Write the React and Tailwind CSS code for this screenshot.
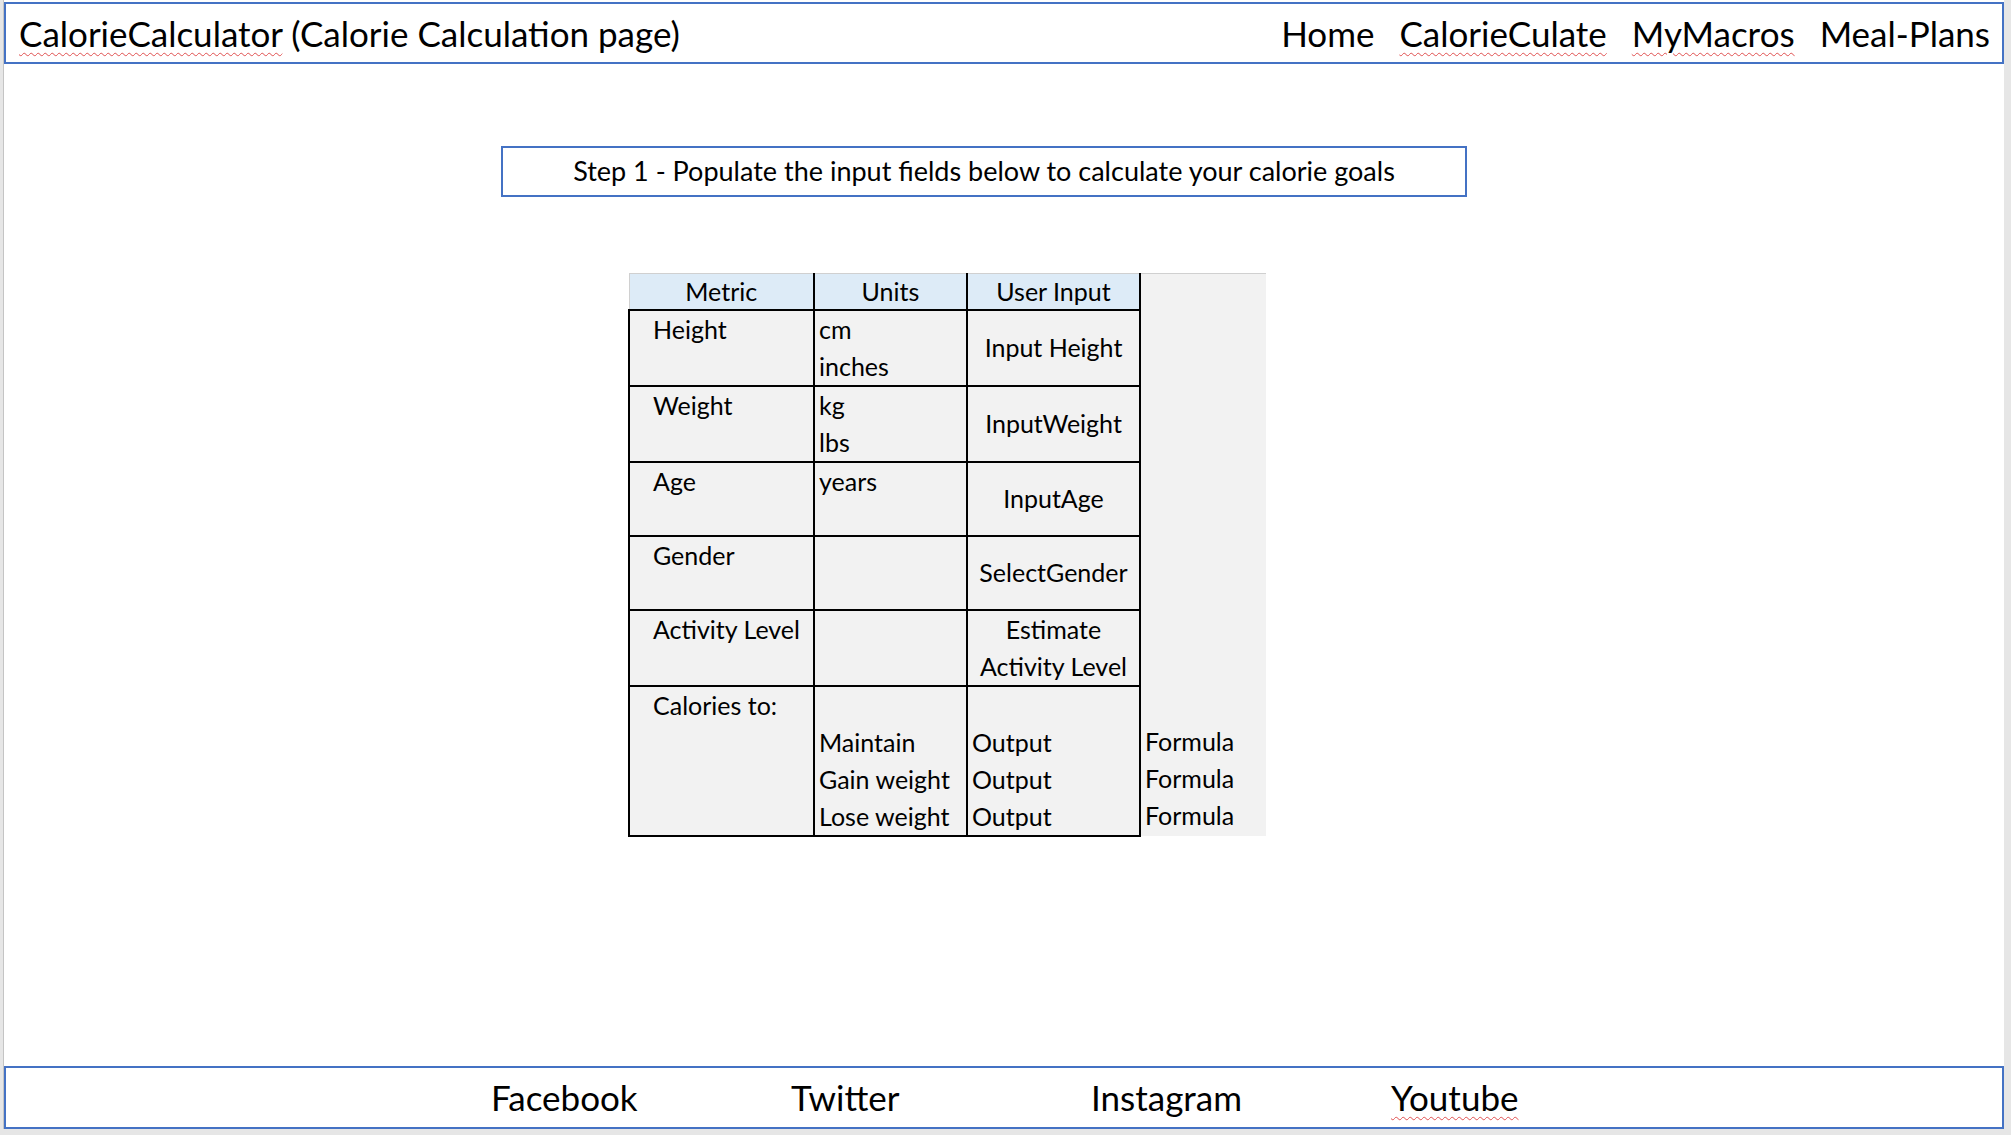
import React from 'react';

const navLinks = [
  { label: 'Home', flagged: false },
  { label: 'CalorieCulate', flagged: true },
  { label: 'MyMacros', flagged: true },
  { label: 'Meal-Plans', flagged: false },
];

const footerLinks = [
  { label: 'Facebook', flagged: false },
  { label: 'Twitter', flagged: false },
  { label: 'Instagram', flagged: false },
  { label: 'Youtube', flagged: true },
];

// red squiggle like a spell checker
const squiggle = 'underline decoration-wavy decoration-[#e05050] decoration-1 underline-offset-[5px]';

const cellBase = 'border-2 border-black bg-[#f2f2f2] align-top text-[25px] leading-[37px] text-black';

const rows = [
  { metric: 'Height', units: ['cm', 'inches'], input: ['Input Height'] },
  { metric: 'Weight', units: ['kg', 'lbs'], input: ['InputWeight'] },
  { metric: 'Age', units: ['years'], input: ['InputAge'] },
  { metric: 'Gender', units: [], input: ['SelectGender'] },
  { metric: 'Activity Level', units: [], input: ['Estimate', 'Activity Level'] },
];

const outcomes = ['Maintain', 'Gain weight', 'Lose weight'];

const CalorieTable = () => {
  return (
    <table className="border-collapse table-fixed">
      <colgroup>
        <col className="w-[185px]" />
        <col className="w-[153px]" />
        <col className="w-[173px]" />
        <col className="w-[126px]" />
      </colgroup>
      <thead>
        <tr className="h-[36px]">
          <th className="border-t border-l border-[#d0d0d0] border-b-2 border-b-black border-r-2 border-r-black bg-[#ddebf7] text-[25px] leading-[34px] font-normal text-center">Metric</th>
          <th className="border-t border-[#d0d0d0] border-b-2 border-b-black border-r-2 border-r-black bg-[#ddebf7] text-[25px] leading-[34px] font-normal text-center">Units</th>
          <th className="border-t border-[#d0d0d0] border-b-2 border-b-black border-r-2 border-r-black bg-[#ddebf7] text-[25px] leading-[34px] font-normal text-center">User Input</th>
          <th className="border-t border-[#d0d0d0] bg-[#f2f2f2]"></th>
        </tr>
      </thead>
      <tbody>
        {rows.map((r) => (
          <tr key={r.metric} className="h-[74px]">
            <td className={`${cellBase} pl-[23px]`}>{r.metric}</td>
            <td className={`${cellBase} pl-[4px]`}>
              {r.units.map((u) => <div key={u}>{u}</div>)}
            </td>
            <td className={`${cellBase} !align-middle text-center`}>
              {r.input.map((t) => <div key={t}>{t}</div>)}
            </td>
            <td className="bg-[#f2f2f2]"></td>
          </tr>
        ))}
        <tr className="h-[148px]">
          <td className={`${cellBase} pl-[23px]`}>Calories to:</td>
          <td className={`${cellBase} pl-[4px]`}>
            <div>&nbsp;</div>
            {outcomes.map((o) => <div key={o}>{o}</div>)}
          </td>
          <td className={`${cellBase} pl-[4px]`}>
            <div>&nbsp;</div>
            <div>Output</div>
            <div>Output</div>
            <div>Output</div>
          </td>
          <td className="bg-[#f2f2f2] align-top text-[25px] leading-[37px] pl-[4px]">
            <div>&nbsp;</div>
            <div>Formula</div>
            <div>Formula</div>
            <div>Formula</div>
          </td>
        </tr>
      </tbody>
    </table>
  );
};

export default function App() {
  return (
    <div className="h-[1135px] w-full bg-[#e6e6e6] flex flex-col pb-[6px] text-black font-['Lato',sans-serif]">
      <div className="flex-1 ml-[3px] mr-[7px] bg-white border-l border-[#c4c4c4] flex flex-col pt-[2px]">
        <header className="h-[62px] border-2 border-[#4472c4] flex items-center justify-between pl-[13px] pr-[12px]">
          <p className="text-[35px]">
            <span className={squiggle}>CalorieCalculator</span> (Calorie Calculation page)
          </p>
          <nav className="flex items-center gap-[25px] text-[35px]">
            {navLinks.map((l) => (
              <span key={l.label} className={l.flagged ? squiggle : ''}>{l.label}</span>
            ))}
          </nav>
        </header>

        <main className="flex-1 flex flex-col">
          <div className="mt-[82px] ml-[497px] w-[966px] h-[51px] border-2 border-[#4472c4] flex items-center justify-center text-[27px]">
            Step 1 - Populate the input fields below to calculate your calorie goals
          </div>
          <div className="mt-[76px] ml-[624px]">
            <CalorieTable />
          </div>
        </main>

        <footer className="h-[63px] border-2 border-[#4472c4] flex items-center pl-[485px] text-[35px]">
          {footerLinks.map((l) => (
            <div key={l.label} className="w-[300px]">
              <span className={l.flagged ? squiggle : ''}>{l.label}</span>
            </div>
          ))}
        </footer>
      </div>
    </div>
  );
}
